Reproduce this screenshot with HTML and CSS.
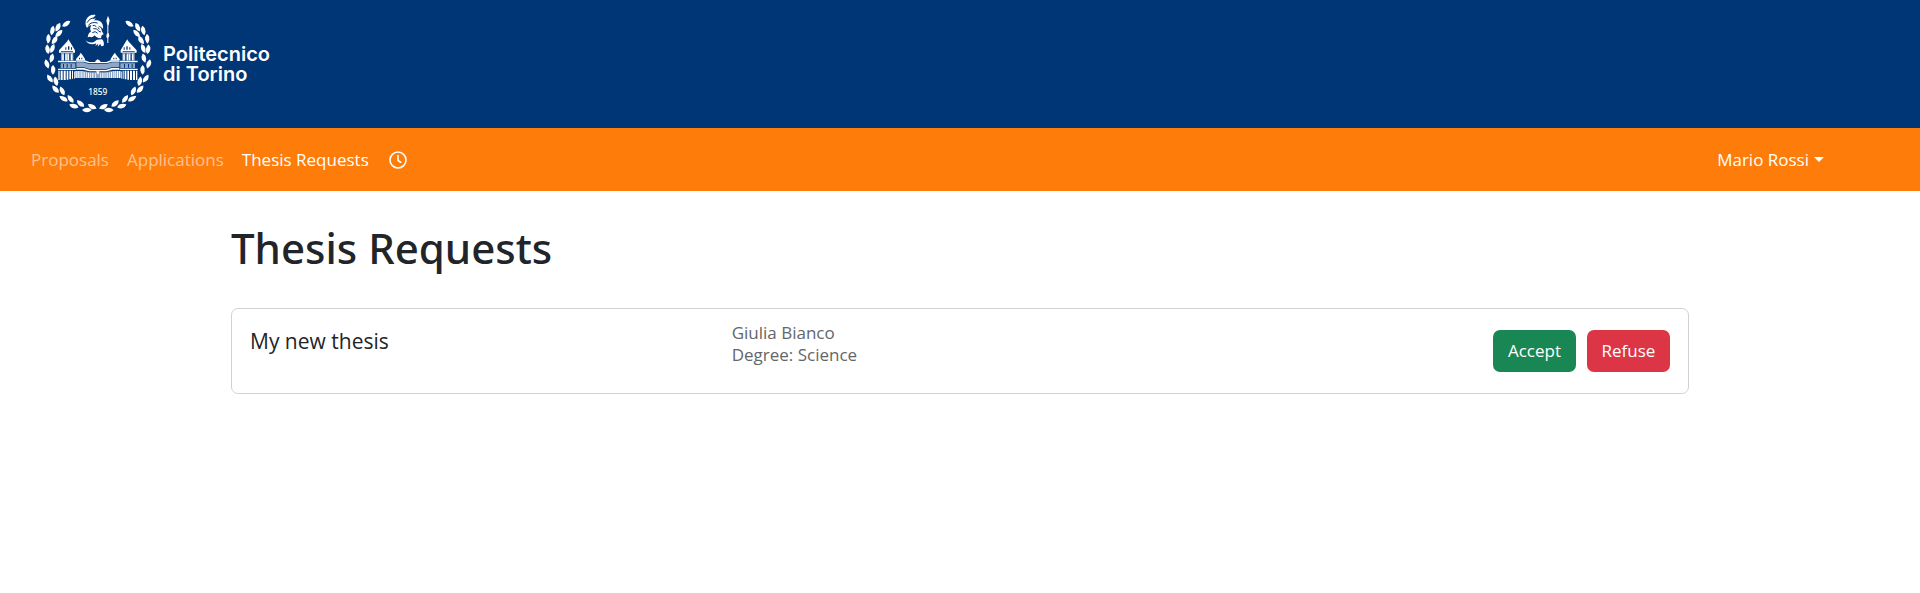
FILE: index.html
```html
<!DOCTYPE html>
<html lang="en">
<head>
<meta charset="utf-8">
<meta name="viewport" content="width=device-width, initial-scale=1">
<title>Thesis Requests</title>
<link rel="stylesheet" href="styles.css">
</head>
<body>
<header class="banner">
  <a class="brand" href="#">
    <svg class="crest" viewBox="42 36 324 309" aria-hidden="true">
      <defs>
        <path id="leaf" d="M-15 0Q-6 -8 5 -6Q11 -4 14 0Q6 8 -2 7Q-10 6 -15 0Z"/>
        <g id="branch">
          <use href="#leaf" transform="translate(109 71) rotate(-32)"/>
          <use href="#leaf" transform="translate(84 81) rotate(-62)"/>
          <use href="#leaf" transform="translate(87 100) rotate(-42)"/>
          <use href="#leaf" transform="translate(67 91) rotate(-76)"/>
          <use href="#leaf" transform="translate(74 120) rotate(-55)"/>
          <use href="#leaf" transform="translate(55 116) rotate(-84)"/>
          <use href="#leaf" transform="translate(67 145) rotate(-66)"/>
          <use href="#leaf" transform="translate(53 148) rotate(82)"/>
          <use href="#leaf" transform="translate(65 174) rotate(-74)"/>
          <use href="#leaf" transform="translate(51 192) rotate(74)"/>
          <use href="#leaf" transform="translate(69 209) rotate(-88)"/>
          <use href="#leaf" transform="translate(60 236) rotate(58)"/>
          <use href="#leaf" transform="translate(78 244) rotate(78)"/>
          <use href="#leaf" transform="translate(77 268) rotate(48)"/>
          <use href="#leaf" transform="translate(97 273) rotate(66)"/>
          <use href="#leaf" transform="translate(101 296) rotate(32)"/>
          <use href="#leaf" transform="translate(122 297) rotate(55)"/>
          <use href="#leaf" transform="translate(132 318) rotate(18)"/>
          <use href="#leaf" transform="translate(152 311) rotate(42)"/>
          <use href="#leaf" transform="translate(171 330) rotate(0)"/>
          <use href="#leaf" transform="translate(187 320) rotate(28)"/>
        </g>
        <g id="wing">
          <path d="M115 118L119 124L135 151V158H87V151L112 124Z"/>
          <path d="M84 182H138V187H84ZM84 206H138V210H84Z"/>
          <path class="soft" d="M93 158H130V182H93ZM92 190H136V204H92Z"/>
          <path d="M97 163H101V181H97ZM106 163H110V181H106ZM113 163H117V181H113ZM123 163H127V181H123Z"/>
          <path d="M85 212H89V240H85ZM92 212H98V240H92ZM101 212H107V240H101ZM110 212H115V239H110ZM118 212H123V238H118ZM126 212H129V236H126Z"/>
          <path d="M152 158L157 164L165 177V181H138V177L149 164Z"/>
          <path d="M139 181H165L178 186H204V189H175L162 185H139ZM139 204H162L180 210H204V214H178L160 209H139Z"/>
          <path class="soft" d="M139 187H160L175 191H204V208H180L162 202H139ZM133 213H160L180 217H204V234H133Z"/>
          <path d="M132 215H134V236H132ZM137 213H140V234H137ZM143 213H146V234H143ZM149 213H151V234H149ZM154 214H157V234H154ZM161 216H164V234H161ZM168 217H170V234H168ZM174 218H177V234H174ZM181 218H183V234H181ZM187 218H190V234H187ZM195 218H197V234H195Z"/>
          <path class="cut" d="M102 160H105V182H102ZM118 160H121V182H118ZM99 192H102V203H99ZM110 192H113V203H110ZM122 192H125V203H122ZM106 142H109V149H106ZM114 139H118V149H114ZM123 142H126V149H123ZM93 153H129V155H93ZM147 173H150V178H147ZM154 173H157V178H154Z"/>
        </g>
      </defs>
      <g class="ink">
        <use href="#branch"/>
        <use href="#branch" transform="translate(407 0) scale(-1 1)"/>
        <use href="#wing"/>
        <use href="#wing" transform="translate(407 0) scale(-1 1)"/>
        <path d="M196 183L203 178L211 183V187H196ZM198 214H209L204 224Z"/>
        <path d="M197 45C184 43 173 49 168 60C165 69 167 78 171 84C175 79 179 76 184 75C180 82 180 89 183 95C177 97 174 104 173 112L179 110C185 113 190 111 194 106C199 112 206 116 213 114L215 106L221 103L216 94L213 84L204 77C210 77 215 81 219 87C221 78 217 68 210 64C204 60 197 60 191 62L198 55L187 58Z"/>
        <path d="M167 121C174 128 184 129 192 126L201 119L216 118C221 122 223 130 221 137L214 139L211 132L203 140L205 131L196 138L199 130C188 136 172 133 167 121Z"/>
        <path class="crease" d="M171 68Q178 55 191 53M175 76Q184 64 203 69M188 77Q194 74 199 80M190 86Q200 84 206 92M187 98Q196 91 203 100M206 94L213 96M204 82L208 88"/>
        <path d="M234 47L239 61L236 76H232L229 62ZM232 76H235V101H232ZM230 102L236 99L238 107L235 114V129H232V115L229 111Z"/>
      </g>
      <text class="year" x="203" y="284">1859</text>
    </svg>
    <span class="brand-name">Politecnico<br>di Torino</span>
  </a>
</header>
<nav class="navbar" aria-label="Main">
  <div class="nav-links">
    <a class="nav-link" href="#">Proposals</a>
    <a class="nav-link" href="#">Applications</a>
    <a class="nav-link active" href="#" aria-current="page">Thesis Requests</a>
    <button class="clock" type="button" aria-label="Virtual clock">
      <svg viewBox="0 0 18 18" aria-hidden="true"><circle cx="9" cy="9" r="8"/><path d="M9 4.5V9.5L11.7 11.2"/></svg>
    </button>
  </div>
  <button class="user" type="button" aria-haspopup="true">Mario Rossi</button>
</nav>
<main class="container">
  <h1 class="title">Thesis Requests</h1>
  <article class="request">
    <h2 class="request-title">My new thesis</h2>
    <p class="request-info">Giulia Bianco<br>Degree: Science</p>
    <div class="actions">
      <button class="btn accept" type="button">Accept</button>
      <button class="btn refuse" type="button">Refuse</button>
    </div>
  </article>
</main>
</body>
</html>
```
FILE: styles.css
```css
* { box-sizing: border-box; }
body {
  margin: 0;
  background: #fff;
  color: #212529;
  font: 17px/26px "Open Sans", "Noto Sans", sans-serif;
}
button { font: inherit; cursor: pointer; }
a { text-decoration: none; }

.banner { background: #003576; padding: 12px 44px 13px; }
.brand { display: inline-flex; align-items: center; gap: 11px; color: #fff; vertical-align: top; }
.crest { width: 108px; height: 103px; }
.ink { fill: #fff; }
.soft { fill: #8fa6c4; }
.cut { fill: #003576; }
.crease { fill: none; stroke: #003576; stroke-width: 3; }
.year { fill: #fff; font: 500 25px "Noto Sans", sans-serif; text-anchor: middle; }
.brand-name { font: 600 20px/20px Inter, "Open Sans", sans-serif; }

.navbar {
  display: flex;
  align-items: center;
  justify-content: space-between;
  min-height: 63px;
  padding: 0 96px 0 31px;
  background: #fe7c09;
}
.nav-links { display: flex; align-items: center; gap: 18px; }
.nav-link { color: rgba(255, 255, 255, .55); }
.nav-link.active { color: #fff; }
.clock { display: flex; padding: 0 2px; border: 0; background: none; }
.clock svg { width: 18px; height: 18px; fill: none; stroke: #fff; stroke-width: 1.6; stroke-linecap: round; }
.user { display: flex; align-items: center; gap: 5px; padding: 0; border: 0; background: none; color: #fff; }
.user::after { content: ""; border: 5px solid transparent; border-top-color: #fff; border-bottom: 0; }

.container { max-width: 1458px; margin: 0 auto; padding-top: 30px; }
.title { margin: 0 0 34px; font: 500 42px/53px "Noto Sans", "Open Sans", sans-serif; }
.request {
  display: grid;
  grid-template-columns: repeat(3, 1fr);
  column-gap: 25px;
  min-height: 86px;
  padding: 13px 18px 20px;
  border: 1px solid #d0d1d2;
  border-radius: 7px;
}
.request-title { margin: 6px 0 0; font-size: 21px; line-height: 26px; font-weight: 400; }
.request-info { margin: 0; color: #63666a; line-height: 22px; }
.actions { display: flex; justify-content: flex-end; gap: 11px; padding-top: 8px; }
.btn { min-width: 83px; height: 42px; padding: 0 14px; border: 0; border-radius: 7px; color: #fff; }
.accept { background: #198754; }
.refuse { background: #dc3545; }
```
